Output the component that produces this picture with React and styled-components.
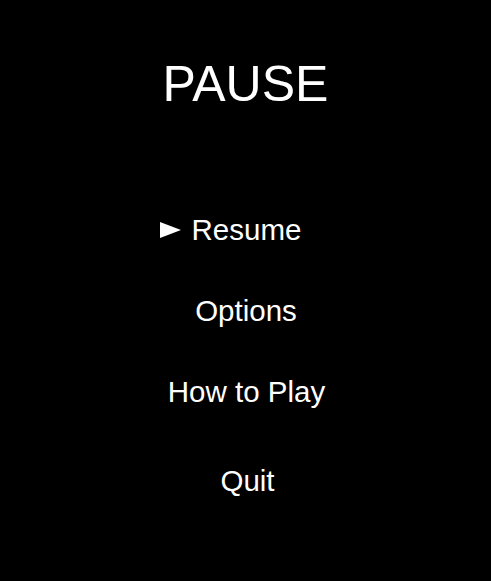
import React from 'react';
import styled, { createGlobalStyle } from 'styled-components';

const GlobalStyle = createGlobalStyle`
  html, body {
    margin: 0;
    padding: 0;
    background: #000;
  }
  body {
    font-family: "Liberation Sans", Arial, sans-serif;
  }
`;

const Screen = styled.div`
  width: 491px;
  height: 581px;
  background: #000;
  color: #fff;
  display: flex;
  flex-direction: column;
  align-items: center;
  padding-top: 59px;
  box-sizing: border-box;
`;

const Title = styled.h1`
  margin: 0;
  font-size: 50px;
  font-weight: 400;
  line-height: 1;
`;

const Menu = styled.ul`
  list-style: none;
  margin: 106px 0 0;
  padding: 0;
  display: flex;
  flex-direction: column;
  align-items: center;
  gap: 51px;
`;

const Item = styled.li`
  position: relative;
  font-size: 29.5px;
  line-height: 1;
  margin-top: ${p => p.$extra || 0}px;
  margin-left: ${p => p.$shift || 0}px;
`;

const Cursor = styled.span`
  position: absolute;
  right: calc(100% + 11px);
  top: 7px;
  width: 0;
  height: 0;
  border-top: 8px solid transparent;
  border-bottom: 8px solid transparent;
  border-left: 21px solid #fff;
`;

const items = [
  { label: 'Resume', selected: true, shift: 2 },
  { label: 'Options', shift: 1 },
  { label: 'How to Play', extra: 1, shift: 2 },
  { label: 'Quit', extra: 8, shift: 4 },
];

export default function App() {
  return (
    <>
      <GlobalStyle />
      <Screen>
        <Title>PAUSE</Title>
        <Menu>
          {items.map(it => (
            <Item key={it.label} $extra={it.extra} $shift={it.shift}>
              {it.selected && <Cursor />}
              {it.label}
            </Item>
          ))}
        </Menu>
      </Screen>
    </>
  );
}
